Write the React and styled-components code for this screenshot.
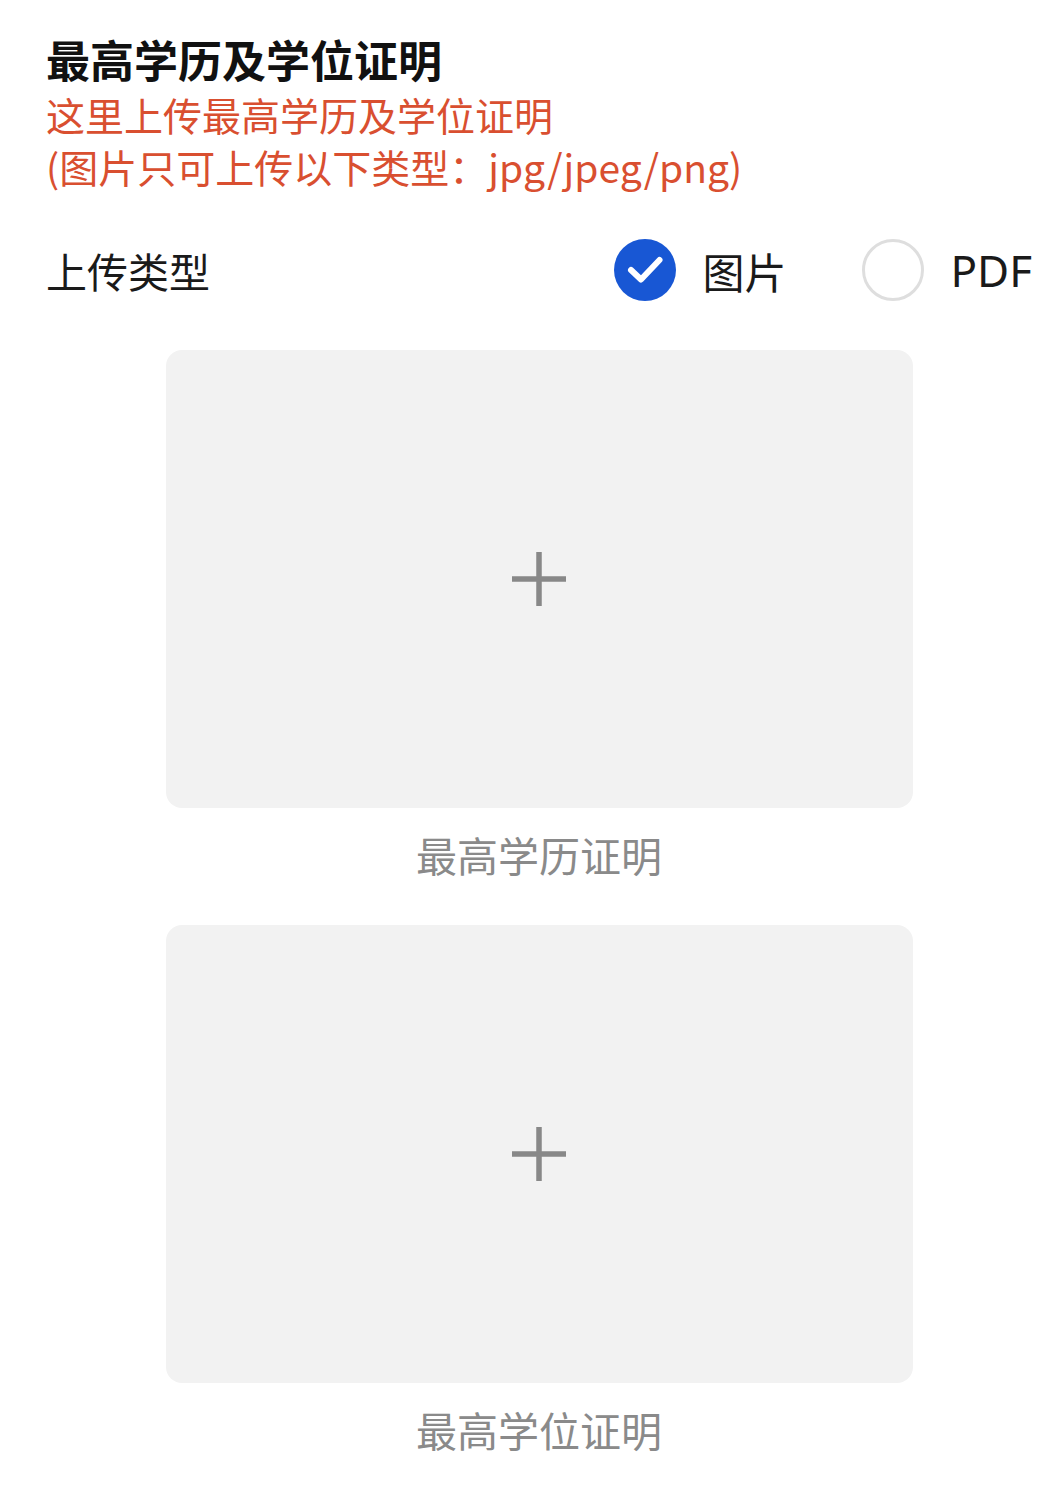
import React, { useState } from 'react';
import styled, { createGlobalStyle } from 'styled-components';

const GlobalStyle = createGlobalStyle`
  html, body {
    margin: 0;
    padding: 0;
    background: #ffffff;
  }
  body {
    font-family: "Noto Sans CJK SC", "Noto Sans", "Liberation Sans", sans-serif;
  }
`;

const Page = styled.div`
  width: 1064px;
  min-height: 1507px;
  box-sizing: border-box;
  padding: 30px 32px 0 46px;
  display: flex;
  flex-direction: column;
`;

const Title = styled.h1`
  margin: 0;
  font-size: 44px;
  line-height: 58px;
  font-weight: 700;
  color: #111111;
`;

const Hint = styled.p`
  margin: 0;
  font-size: 39px;
  line-height: 52px;
  font-weight: 400;
  color: #d94f30;
`;

const TypeRow = styled.div`
  margin-top: 47px;
  height: 62px;
  display: flex;
  align-items: center;
  justify-content: space-between;
`;

const RowLabel = styled.span`
  font-size: 41px;
  color: #1a1a1a;
`;

const Options = styled.div`
  display: flex;
  align-items: center;
  gap: 76px;
`;

const Option = styled.label`
  display: flex;
  align-items: center;
  gap: 26px;
  font-size: 42px;
  color: #1a1a1a;
  cursor: pointer;
`;

const Dot = styled.span`
  width: 62px;
  height: 62px;
  box-sizing: border-box;
  border-radius: 50%;
  display: flex;
  align-items: center;
  justify-content: center;
  background: ${p => (p.$checked ? '#1857d4' : '#ffffff')};
  border: ${p => (p.$checked ? 'none' : '3px solid #dedede')};
`;

const PdfText = styled.span`
  font-family: "Noto Sans", "Liberation Sans", sans-serif;
  font-size: 44px;
`;

const Uploads = styled.div`
  display: flex;
  flex-direction: column;
  align-items: center;
  margin-top: 49px;
  gap: 43px;
`;

const UploadItem = styled.div`
  display: flex;
  flex-direction: column;
  align-items: center;
  gap: 18px;
`;

const UploadBox = styled.div`
  width: 747px;
  height: 458px;
  border-radius: 16px;
  background: #f2f2f2;
  display: flex;
  align-items: center;
  justify-content: center;
  cursor: pointer;
`;

const UploadLabel = styled.span`
  font-size: 41px;
  line-height: 56px;
  color: #8a8a8a;
`;

const Check = () => (
  <svg width="62" height="62" viewBox="0 0 62 62">
    <path
      d="M17 31 L27 40.5 L45.5 21"
      fill="none"
      stroke="#ffffff"
      strokeWidth="6"
      strokeLinecap="round"
      strokeLinejoin="round"
    />
  </svg>
);

const Plus = () => (
  <svg width="54" height="54" viewBox="0 0 54 54">
    <path d="M27 0 V54 M0 27 H54" stroke="#888888" strokeWidth="5.5" />
  </svg>
);

const uploads = ['最高学历证明', '最高学位证明'];

const App = () => {
  const [type, setType] = useState('image');

  return (
    <Page>
      <GlobalStyle />
      <Title>最高学历及学位证明</Title>
      <Hint>这里上传最高学历及学位证明</Hint>
      <Hint>(图片只可上传以下类型：jpg/jpeg/png)</Hint>
      <TypeRow>
        <RowLabel>上传类型</RowLabel>
        <Options>
          <Option onClick={() => setType('image')}>
            <Dot $checked={type === 'image'}>{type === 'image' && <Check />}</Dot>
            图片
          </Option>
          <Option onClick={() => setType('pdf')}>
            <Dot $checked={type === 'pdf'}>{type === 'pdf' && <Check />}</Dot>
            <PdfText>PDF</PdfText>
          </Option>
        </Options>
      </TypeRow>
      <Uploads>
        {uploads.map(label => (
          <UploadItem key={label}>
            <UploadBox>
              <Plus />
            </UploadBox>
            <UploadLabel>{label}</UploadLabel>
          </UploadItem>
        ))}
      </Uploads>
    </Page>
  );
};

export default App;
